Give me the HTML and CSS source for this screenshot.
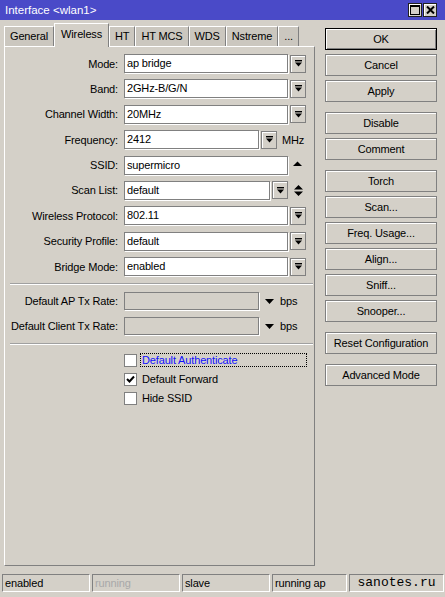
FILE: index.html
```html
<!DOCTYPE html>
<html>
<head>
<meta charset="utf-8">
<link rel="stylesheet" href="styles.css">
</head>
<body>
<div class="titlebar">
  <span class="title">Interface &lt;wlan1&gt;</span>
  <div class="tb-btns">
    <span class="tb-btn"><svg width="10" height="10" viewBox="0 0 10 10"><rect x="0.5" y="0.5" width="9" height="9" fill="none" stroke="#000"/><rect x="0" y="0" width="10" height="2" fill="#000"/></svg></span>
    <span class="tb-btn"><svg width="9" height="8" viewBox="0 0 9 8"><path d="M1 0.5 L8 7.5 M8 0.5 L1 7.5" stroke="#000" stroke-width="2"/></svg></span>
  </div>
</div>
<div class="main">
  <div class="left">
    <div class="tabs">
      <span class="tab">General</span>
      <span class="tab active">Wireless</span>
      <span class="tab">HT</span>
      <span class="tab">HT MCS</span>
      <span class="tab">WDS</span>
      <span class="tab">Nstreme</span>
      <span class="tab">...</span>
    </div>
    <div class="panel">
      <div class="rows">
        <div class="row"><span class="lbl">Mode:</span><span class="inp w-full">ap bridge</span><span class="dd"><svg width="7" height="7" viewBox="0 0 7 7"><rect x="0" y="0" width="7" height="1.4" fill="#000"/><path d="M0 2.5 H7 L3.5 6.5 Z" fill="#000"/></svg></span></div>
        <div class="row"><span class="lbl">Band:</span><span class="inp w-full">2GHz-B/G/N</span><span class="dd"><svg width="7" height="7" viewBox="0 0 7 7"><rect x="0" y="0" width="7" height="1.4" fill="#000"/><path d="M0 2.5 H7 L3.5 6.5 Z" fill="#000"/></svg></span></div>
        <div class="row"><span class="lbl">Channel Width:</span><span class="inp w-full">20MHz</span><span class="dd"><svg width="7" height="7" viewBox="0 0 7 7"><rect x="0" y="0" width="7" height="1.4" fill="#000"/><path d="M0 2.5 H7 L3.5 6.5 Z" fill="#000"/></svg></span></div>
        <div class="row"><span class="lbl">Frequency:</span><span class="inp w-freq">2412</span><span class="dd"><svg width="7" height="7" viewBox="0 0 7 7"><rect x="0" y="0" width="7" height="1.4" fill="#000"/><path d="M0 2.5 H7 L3.5 6.5 Z" fill="#000"/></svg></span><span class="unit">MHz</span></div>
        <div class="row"><span class="lbl">SSID:</span><span class="inp w-full">supermicro</span><span class="arrow-side"><svg width="9" height="5" viewBox="0 0 9 5"><path d="M0 5 H9 L4.5 0.5 Z" fill="#000"/></svg></span></div>
        <div class="row"><span class="lbl">Scan List:</span><span class="inp w-scan">default</span><span class="dd"><svg width="7" height="7" viewBox="0 0 7 7"><rect x="0" y="0" width="7" height="1.4" fill="#000"/><path d="M0 2.5 H7 L3.5 6.5 Z" fill="#000"/></svg></span><span class="arrow-side2"><svg width="9" height="11" viewBox="0 0 9 11"><path d="M0 4.5 H9 L4.5 0 Z M0 6.5 H9 L4.5 11 Z" fill="#000"/></svg></span></div>
        <div class="row"><span class="lbl">Wireless Protocol:</span><span class="inp w-full">802.11</span><span class="dd"><svg width="7" height="7" viewBox="0 0 7 7"><rect x="0" y="0" width="7" height="1.4" fill="#000"/><path d="M0 2.5 H7 L3.5 6.5 Z" fill="#000"/></svg></span></div>
        <div class="row"><span class="lbl">Security Profile:</span><span class="inp w-full">default</span><span class="dd"><svg width="7" height="7" viewBox="0 0 7 7"><rect x="0" y="0" width="7" height="1.4" fill="#000"/><path d="M0 2.5 H7 L3.5 6.5 Z" fill="#000"/></svg></span></div>
        <div class="row"><span class="lbl">Bridge Mode:</span><span class="inp w-full">enabled</span><span class="dd"><svg width="7" height="7" viewBox="0 0 7 7"><rect x="0" y="0" width="7" height="1.4" fill="#000"/><path d="M0 2.5 H7 L3.5 6.5 Z" fill="#000"/></svg></span></div>
      </div>
      <div class="sep"></div>
      <div class="rows rate-rows">
        <div class="row rrow"><span class="lbl">Default AP Tx Rate:</span><span class="inp w-rate disabled"></span><span class="tri"><svg width="9" height="5" viewBox="0 0 9 5"><path d="M0 0 H9 L4.5 5 Z" fill="#000"/></svg></span><span class="unit2">bps</span></div>
        <div class="row rrow"><span class="lbl">Default Client Tx Rate:</span><span class="inp w-rate disabled"></span><span class="tri"><svg width="9" height="5" viewBox="0 0 9 5"><path d="M0 0 H9 L4.5 5 Z" fill="#000"/></svg></span><span class="unit2">bps</span></div>
      </div>
      <div class="sep sep2"></div>
      <div class="checks">
        <div class="chk"><span class="box"></span><span class="clbl focus">Default Authenticate</span></div>
        <div class="chk"><span class="box"><svg width="9" height="9" viewBox="0 0 9 9"><path d="M1 4 L3.5 6.5 L8 1.5" fill="none" stroke="#000" stroke-width="2"/></svg></span><span class="clbl">Default Forward</span></div>
        <div class="chk"><span class="box"></span><span class="clbl">Hide SSID</span></div>
      </div>
    </div>
  </div>
  <div class="right">
    <div class="group">
      <div class="btn default">OK</div>
      <div class="btn">Cancel</div>
      <div class="btn">Apply</div>
    </div>
    <div class="group">
      <div class="btn">Disable</div>
      <div class="btn">Comment</div>
    </div>
    <div class="group">
      <div class="btn">Torch</div>
      <div class="btn">Scan...</div>
      <div class="btn">Freq. Usage...</div>
      <div class="btn">Align...</div>
      <div class="btn">Sniff...</div>
      <div class="btn">Snooper...</div>
    </div>
    <div class="group">
      <div class="btn">Reset Configuration</div>
    </div>
    <div class="group">
      <div class="btn">Advanced Mode</div>
    </div>
  </div>
</div>
<div class="statusbar">
  <span class="cell c1">enabled</span>
  <span class="cell c2 dim">running</span>
  <span class="cell c3">slave</span>
  <span class="cell c4">running ap</span>
  <span class="cell c5 mono">sanotes.ru</span>
</div>
</body>
</html>
```
FILE: styles.css
```css
* { box-sizing: border-box; }
body {
  margin: 0;
  width: 445px;
  height: 597px;
  overflow: hidden;
  background: #d4d0c8;
  font: 11px "Liberation Sans", Arial, sans-serif;
  letter-spacing: -0.15px;
  color: #000;
}
.titlebar {
  height: 20px;
  background: #4a4ac8;
  color: #fff;
  display: flex;
  align-items: center;
  justify-content: space-between;
  padding: 0 8px 0 5px;
}
.title { font-size: 11.5px; letter-spacing: 0; }
.tb-btns { display: flex; gap: 1px; }
.tb-btn {
  width: 14px;
  height: 14px;
  background: #d4d0c8;
  border: 1px solid #202020;
  box-shadow: inset 1px 1px 0 #fff;
  display: flex;
  align-items: center;
  justify-content: center;
}
.main { display: flex; }
.left { margin: 3px 0 0 4px; width: 311px; }
.tabs { display: flex; align-items: flex-end; height: 23px; }
.tab {
  height: 20px;
  line-height: 19px;
  padding: 0 5px;
  background: #cbc7bf;
  border: 1px solid;
  border-color: #fff #808080 transparent #fff;
  border-bottom: none;
  white-space: nowrap;
}
.tab.active {
  height: 24px;
  margin-bottom: -1px;
  line-height: 20px;
  padding: 0 6px;
  background: #d4d0c8;
  position: relative;
  z-index: 1;
}
.panel {
  height: 520px;
  border: 1px solid;
  border-color: #fff #808080 #808080 #fff;
  padding-top: 7px;
}
.rows { display: flex; flex-direction: column; gap: 6.4px; }
.row { display: flex; align-items: center; height: 19px; }
.lbl { width: 113px; text-align: right; flex: none; white-space: nowrap; }
.inp {
  margin-left: 6px;
  height: 19px;
  background: #fff;
  border: 1px solid #808080;
  box-shadow: 1px 1px 0 #fff;
  padding-left: 2px;
  line-height: 17px;
  flex: none;
}
.w-full { width: 164px; }
.w-freq { width: 135px; }
.w-scan { width: 146px; }
.w-rate { width: 135px; }
.inp.disabled { background: #d4d0c8; }
.dd {
  margin-left: 2px;
  width: 16px;
  height: 18px;
  border: 1px solid #808080;
  box-shadow: inset 1px 1px 0 #fff;
  display: flex;
  align-items: center;
  justify-content: center;
  flex: none;
}
.unit { margin-left: 5px; }
.arrow-side { margin-left: 5px; display: flex; margin-top: -3px; }
.arrow-side2 { margin-left: 6px; display: flex; }
.sep {
  height: 2px;
  border-top: 1px solid #a0a0a0;
  border-bottom: 1px solid #fff;
  margin: 7px 1px 0 5px;
}
.rate-rows { margin-top: 7px; gap: 7px; }
.rrow { height: 18px; }
.rrow .inp { height: 18px; }
.tri { margin-left: 6px; display: flex; }
.unit2 { margin-left: 6px; }
.sep2 { margin-top: 8px; }
.checks { margin-top: 8px; display: flex; flex-direction: column; gap: 5px; padding-left: 119px; }
.chk { display: flex; align-items: center; height: 14px; }
.box {
  width: 13px;
  height: 13px;
  background: #fff;
  border: 1px solid #808080;
  display: flex;
  align-items: center;
  justify-content: center;
  flex: none;
}
.clbl {
  margin-left: 3px;
  padding: 0 1px;
  height: 14px;
  line-height: 12px;
  border: 1px solid transparent;
}
.clbl.focus {
  color: #1010ff;
  border: 1px dotted #000;
  width: 167px;
}
.right { margin-left: 10px; width: 112px; padding-top: 8px; display: flex; flex-direction: column; gap: 10px; }
.group { display: flex; flex-direction: column; gap: 4px; }
.btn {
  height: 22px;
  line-height: 20px;
  text-align: center;
  border: 1px solid #808080;
  box-shadow: inset 1px 1px 0 #fff;
  white-space: nowrap;
}
.btn.default {
  border: 1px solid #000;
  box-shadow: inset 1px 1px 0 #fff, inset -1px -1px 0 #808080;
}
.statusbar { display: flex; gap: 2px; padding-left: 2px; margin-top: 8px; }
.cell {
  height: 18px;
  line-height: 16px;
  border: 1px solid;
  border-color: #808080 #fff #fff #808080;
  padding-left: 2px;
  white-space: nowrap;
}
.c1, .c2, .c3 { width: 88px; }
.c4 { width: 75px; }
.c5 { width: 95px; }
.dim { color: #a8a8a8; }
.mono {
  font: 13px "Liberation Mono", "Courier New", monospace;
  letter-spacing: 0;
  text-align: center;
  padding-left: 0;
}
```
